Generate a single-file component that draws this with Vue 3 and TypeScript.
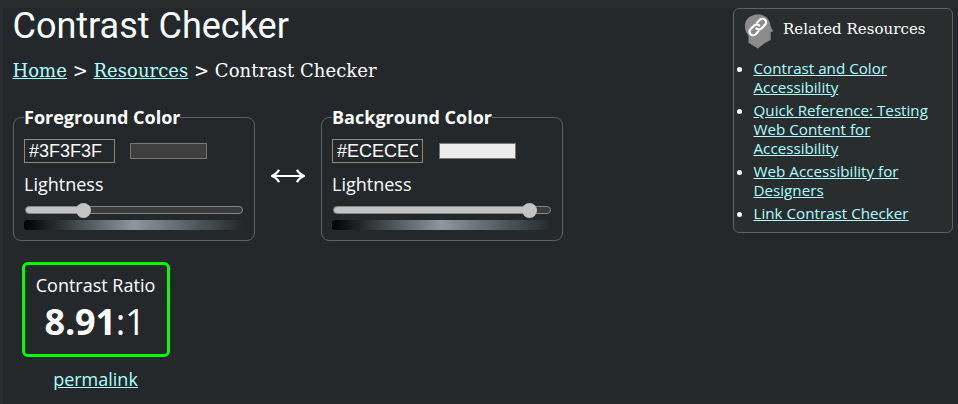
<script setup lang="ts">
import { computed, ref } from 'vue'

interface Swatch {
  id: string
  title: string
  hex: string
  lightness: number
}

const swatches = ref<Swatch[]>([
  { id: 'fg', title: 'Foreground Color', hex: '#3F3F3F', lightness: 25 },
  { id: 'bg', title: 'Background Color', hex: '#ECECEC', lightness: 93.5 },
])

const resources: string[] = [
  'Contrast and Color Accessibility',
  'Quick Reference: Testing Web Content for Accessibility',
  'Web Accessibility for Designers',
  'Link Contrast Checker',
]

function luminance(hex: string): number {
  const [r, g, b] = [1, 3, 5].map((i) => {
    const c = parseInt(hex.slice(i, i + 2), 16) / 255
    return c <= 0.03928 ? c / 12.92 : ((c + 0.055) / 1.055) ** 2.4
  })
  return 0.2126 * r + 0.7152 * g + 0.0722 * b
}

const ratio = computed(() => {
  const [a, b] = swatches.value.map((s) => luminance(s.hex))
  const value = (Math.max(a, b) + 0.05) / (Math.min(a, b) + 0.05)
  return (Math.floor(value * 100) / 100).toString()
})

function setLightness(s: Swatch, event: Event) {
  s.lightness = Number((event.target as HTMLInputElement).value)
  const channel = Math.round(s.lightness * 2.55).toString(16).padStart(2, '0').toUpperCase()
  s.hex = '#' + channel.repeat(3)
}
</script>

<template>
  <div class="page">
    <main class="content">
      <h1>Contrast Checker</h1>
      <nav class="crumbs"><a href="#">Home</a> &gt; <a href="#">Resources</a> &gt; Contrast Checker</nav>

      <div class="pickers">
        <template v-for="(s, i) in swatches" :key="s.id">
          <svg v-if="i === 1" class="swap" viewBox="0 0 34 14" width="34" height="14">
            <path d="M1 7H33" stroke-width="2" />
            <path d="M8 0.8Q6 5 0.8 7Q6 9 8 13.2M26 0.8Q28 5 33.2 7Q28 9 26 13.2" stroke-width="2.3" />
          </svg>
          <fieldset :class="s.id">
            <legend>{{ s.title }}</legend>
            <div class="inputs">
              <input v-model="s.hex" class="hex" type="text" spellcheck="false" />
              <span class="chip" :style="{ background: s.hex }"></span>
            </div>
            <label :for="s.id">Lightness</label>
            <input
              :id="s.id"
              class="slider"
              type="range"
              min="0"
              max="100"
              step="0.5"
              :value="s.lightness"
              :style="{ '--fill': s.lightness + '%' }"
              @input="setLightness(s, $event)"
            />
            <div class="ramp"></div>
          </fieldset>
        </template>
      </div>

      <div class="result">
        <div class="ratio">
          <span class="ratio-label">Contrast Ratio</span>
          <span class="ratio-value"><b>{{ ratio }}</b>:1</span>
        </div>
        <a class="permalink" href="#">permalink</a>
      </div>
    </main>

    <aside class="related">
      <h2>
        <svg width="30" height="36" viewBox="0 0 30 36">
          <path
            d="M14 0.5C21 0.5 26 5 26.5 12L29 17.2L26.7 18.3V26L21.5 28.5L13.8 34.5L4.5 28.8V21.5C-1.5 15-1 1 14 0.5Z"
            fill="#8c8c8c"
          />
          <g transform="translate(13.8 13) rotate(-45)" fill="none" stroke="#fff" stroke-width="2.2" stroke-linecap="round">
            <path d="M-2.5 3.6H-6.6A3.6 3.6 0 0 1-6.6-3.6H-1.6A3.6 3.6 0 0 1 2 0" />
            <path d="M2.5-3.6H6.6A3.6 3.6 0 0 1 6.6 3.6H1.6A3.6 3.6 0 0 1-2 0" />
          </g>
        </svg>
        <span>Related Resources</span>
      </h2>
      <ul>
        <li v-for="r in resources" :key="r"><a href="#">{{ r }}</a></li>
      </ul>
    </aside>
  </div>
</template>

<style>
body {
  margin: 0;
  background: #2a2d2e;
}
</style>

<style scoped>
.page {
  box-sizing: border-box;
  display: flex;
  justify-content: space-between;
  align-items: flex-start;
  height: 396px;
  margin: 8px 0 0 3px;
  padding: 0 5px 0 10px;
  background: #24282a;
  color: #fff;
  font: 18px/24px 'Open Sans', sans-serif;
}
a {
  color: #aff;
  text-decoration: underline;
}
h1 {
  margin: 0 0 0 -0.5px;
  font: 400 36px/36px Roboto, sans-serif;
  color: #f8ffff;
}
.crumbs {
  margin: 15px 0 0 -0.5px;
  font: 18px/24px 'DejaVu Serif', serif;
  letter-spacing: 0.03px;
}
.pickers {
  display: flex;
  margin-top: 21px;
}
fieldset {
  box-sizing: border-box;
  width: 242px;
  height: 137px;
  margin: 0;
  padding: 0 11px 0 10px;
  border: 1px solid #5d6264;
  border-radius: 8px;
}
legend {
  padding: 0;
  font-weight: 700;
  line-height: 26px;
}
.inputs {
  display: flex;
  align-items: center;
  gap: 15px;
  margin-top: 9px;
}
.bg .inputs {
  gap: 16px;
}
.hex {
  box-sizing: border-box;
  width: 91px;
  height: 24px;
  padding: 0 4px;
  border: 1px solid #948672;
  background: transparent;
  color: #fff;
  font: 18px 'Liberation Sans', sans-serif;
}
.chip {
  box-sizing: border-box;
  width: 77px;
  height: 16px;
  border: 1px solid #777;
}
label {
  display: block;
  margin-top: 9px;
}
.slider {
  display: block;
  box-sizing: border-box;
  appearance: none;
  width: 218px;
  height: 8px;
  margin: 10px 0 0 1px;
  border: 1px solid #858585;
  border-radius: 4px;
  background: linear-gradient(#c3c3c3, #c3c3c3) 0 0 / var(--fill) 100% no-repeat #3b3b3b;
}
.slider::-webkit-slider-thumb {
  appearance: none;
  width: 15px;
  height: 15px;
  border-radius: 50%;
  background: #c3c3c3;
}
.ramp {
  height: 10px;
  margin-top: 6px;
  border-radius: 3px;
  background: linear-gradient(90deg, #000, #8c989e 50%, #24282a);
}
.swap {
  align-self: center;
  margin: 6px 16px 0;
  fill: none;
  stroke: #fff;
}
.result {
  display: flex;
  flex-direction: column;
  align-items: center;
  width: 148px;
  margin: 21px 0 0 9px;
}
.ratio {
  box-sizing: border-box;
  display: flex;
  flex-direction: column;
  align-items: center;
  width: 148px;
  height: 95px;
  padding: 8px 1px 0 0;
  border: 3px solid #0f0;
  border-radius: 6px;
}
.ratio-value {
  margin-right: 1px;
  font-size: 36px;
  line-height: 49px;
  letter-spacing: -0.2px;
}
.permalink {
  margin: 10px 1px 0 0;
}
.related {
  box-sizing: border-box;
  width: 220px;
  height: 225px;
  border: 1px solid #5d6264;
  border-radius: 6px;
  background: #2a2d2e;
  font-size: 15.2px;
  line-height: 19px;
}
h2 {
  display: flex;
  align-items: flex-start;
  gap: 9px;
  height: 36px;
  margin: 5px 0 0 10px;
  font: 400 15px/30px 'DejaVu Serif', serif;
  letter-spacing: 0.04px;
}
ul {
  margin: 9px 17px 0 19.5px;
  padding: 0;
}
li {
  margin-bottom: 4px;
}
</style>
